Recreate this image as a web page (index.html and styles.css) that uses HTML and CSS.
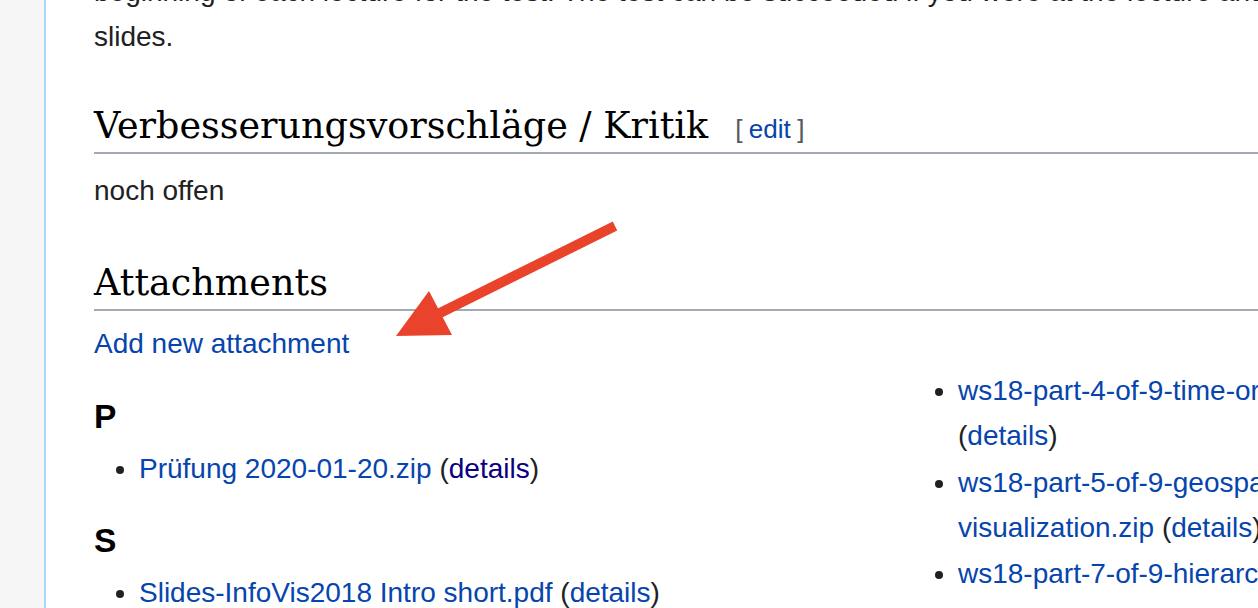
FILE: index.html
```html
<!DOCTYPE html>
<html lang="en">
<head>
<meta charset="utf-8">
<title>Attachments</title>
<link rel="stylesheet" href="styles.css">
</head>
<body>
<div class="page">
  <aside class="sidebar"></aside>
  <main class="content">
    <div class="body">
      <p class="intro">beginning of each lecture for the test. The test can be succeeded if you were at the lecture and read through all of the lecture slides.</p>

      <h2 class="section-heading"><span class="headline">Verbesserungsvorschläge / Kritik</span><span class="editsection"><span class="bracket">[</span><a href="#" class="link">edit</a><span class="bracket">]</span></span></h2>
      <p class="para">noch offen</p>

      <h2 class="section-heading section-attachments"><span class="headline">Attachments</span></h2>
      <div class="add-attachment"><a href="#" class="link">Add new attachment</a></div>

      <div class="attach-cols">
        <div class="attach-col">
          <h3 class="letter">P</h3>
          <ul class="files">
            <li><a href="#" class="link">Prüfung 2020-01-20.zip</a> (<a href="#" class="link visited">details</a>)</li>
          </ul>
          <h3 class="letter">S</h3>
          <ul class="files">
            <li><a href="#" class="link">Slides-InfoVis2018 Intro short.pdf</a> (<a href="#" class="link">details</a>)</li>
          </ul>
        </div>
        <div class="attach-col">
          <ul class="files files-top">
            <li><a href="#" class="link">ws18-part-4-of-9-time-oriented-data-visualization.zip</a> (<a href="#" class="link">details</a>)</li>
            <li><a href="#" class="link">ws18-part-5-of-9-geospatial-data-and-map-based-visualization.zip</a> (<a href="#" class="link">details</a>)</li>
            <li><a href="#" class="link">ws18-part-7-of-9-hierarchical-data-visualization.zip</a> (<a href="#" class="link">details</a>)</li>
          </ul>
        </div>
      </div>
    </div>
  </main>
  <svg class="annotation" width="1258" height="608" viewBox="0 0 1258 608" aria-hidden="true">
    <line x1="615" y1="226" x2="436" y2="315" stroke="#e9432c" stroke-width="10"/>
    <polygon points="396,336 429,291 452,335" fill="#e9432c"/>
  </svg>
</div>
</body>
</html>
```

FILE: styles.css
```css
html, body {
  margin: 0;
  padding: 0;
  background: #ffffff;
  overflow: hidden;
}

.page {
  position: relative;
  display: flex;
  width: 1258px;
  height: 608px;
  overflow: hidden;
}

.sidebar {
  flex: 0 0 44px;
  background: #f6f6f6;
}

.content {
  flex: 1 0 auto;
  border-left: 2px solid #a7d7f9;
  padding-left: 48px;
  background: #ffffff;
}

.annotation {
  position: absolute;
  left: 0;
  top: 0;
  pointer-events: none;
}

.body {
  width: 1604px;
  margin-top: -30px;
  font-family: "Liberation Sans", Arial, sans-serif;
  font-size: 28px;
  line-height: 44.8px;
  color: #202122;
}

.link {
  color: #0645ad;
  text-decoration: none;
}

.link.visited {
  color: #0b0080;
}

.intro {
  margin: 0;
}

.section-heading {
  font-family: "DejaVu Serif", "Liberation Serif", serif;
  font-weight: normal;
  font-size: 36.5px;
  line-height: 47px;
  color: #000000;
  margin: 42px 0 0;
  padding: 0 0 3px;
  border-bottom: 2px solid #a2a9b1;
}

.section-attachments {
  margin-top: 46px;
}

.editsection {
  font-family: "Liberation Sans", Arial, sans-serif;
  font-size: 26px;
  line-height: 1;
  margin-left: 27px;
}

.bracket {
  color: #54595d;
}

.editsection .bracket:first-child {
  margin-right: 6.5px;
}

.editsection .bracket:last-child {
  margin-left: 6.5px;
}

.para {
  margin: 15px 0 0;
}

.add-attachment {
  margin-top: 10.5px;
}

.attach-cols {
  display: grid;
  grid-template-columns: 791px 785px;
  column-gap: 28px;
  align-items: start;
}

.letter {
  font-family: "Liberation Sans", Arial, sans-serif;
  font-size: 33.6px;
  font-weight: bold;
  line-height: normal;
  color: #000000;
  margin: 0;
  padding-top: 28.5px;
}

.attach-col .letter:first-child {
  padding-top: 30.9px;
}

.files {
  margin: 11.2px 0 0 45px;
  padding: 0;
  list-style: disc;
}

.files-top {
  margin-top: 2.6px;
}

.files li {
  margin-bottom: 2px;
}
```
